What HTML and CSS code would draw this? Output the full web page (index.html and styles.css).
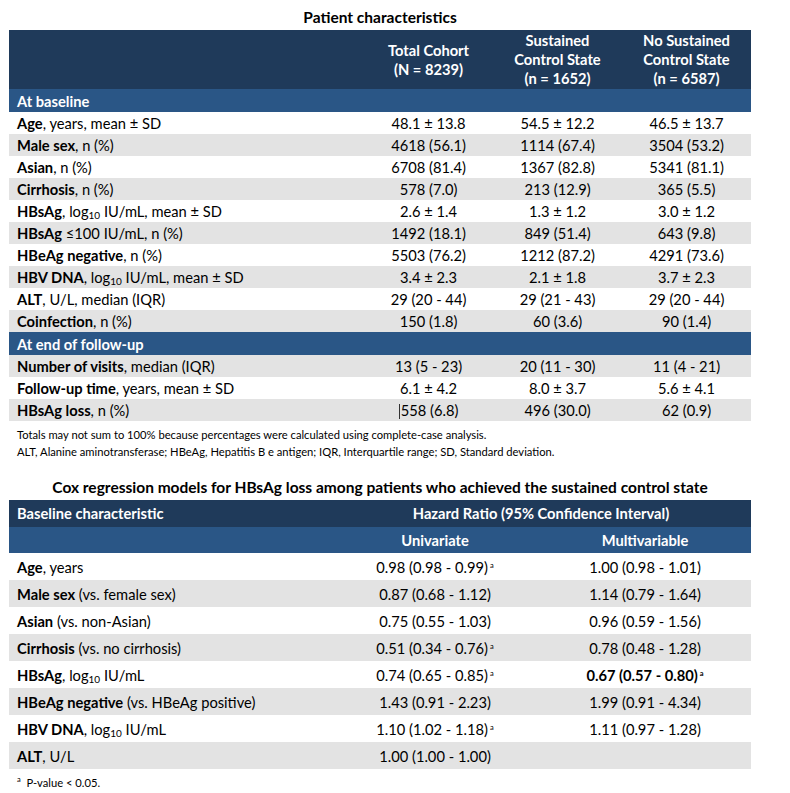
FILE: index.html
```html
<!DOCTYPE html>
<html lang="en">

<head>
    <meta charset="UTF-8">
    <meta name="viewport" content="width=device-width, initial-scale=1.0">
    <title>HBsAg loss - patient characteristics</title>
    <link rel="stylesheet" href="styles.css">
</head>

<body>
    <div class="page">
        <h2 class="table-title">Patient characteristics</h2>

        <table class="data-table characteristics">
            <colgroup>
                <col class="col-label">
                <col class="col-group">
                <col class="col-group">
                <col class="col-group">
            </colgroup>
            <thead>
                <tr class="head-main">
                    <th></th>
                    <th>Total Cohort<br>(N = 8239)</th>
                    <th>Sustained<br>Control State<br>(n = 1652)</th>
                    <th>No Sustained<br>Control State<br>(n = 6587)</th>
                </tr>
            </thead>
            <tbody>
                <tr class="section">
                    <td colspan="4">At baseline</td>
                </tr>
                <tr>
                    <td><b>Age</b>, years, mean ± SD</td>
                    <td>48.1 ± 13.8</td>
                    <td>54.5 ± 12.2</td>
                    <td>46.5 ± 13.7</td>
                </tr>
                <tr class="shade">
                    <td><b>Male sex</b>, n (%)</td>
                    <td>4618 (56.1)</td>
                    <td>1114 (67.4)</td>
                    <td>3504 (53.2)</td>
                </tr>
                <tr>
                    <td><b>Asian</b>, n (%)</td>
                    <td>6708 (81.4)</td>
                    <td>1367 (82.8)</td>
                    <td>5341 (81.1)</td>
                </tr>
                <tr class="shade">
                    <td><b>Cirrhosis</b>, n (%)</td>
                    <td>578 (7.0)</td>
                    <td>213 (12.9)</td>
                    <td>365 (5.5)</td>
                </tr>
                <tr>
                    <td><b>HBsAg</b>, log<sub>10</sub> IU/mL, mean ± SD</td>
                    <td>2.6 ± 1.4</td>
                    <td>1.3 ± 1.2</td>
                    <td>3.0 ± 1.2</td>
                </tr>
                <tr class="shade">
                    <td><b>HBsAg</b> ≤100 IU/mL, n (%)</td>
                    <td>1492 (18.1)</td>
                    <td>849 (51.4)</td>
                    <td>643 (9.8)</td>
                </tr>
                <tr>
                    <td><b>HBeAg negative</b>, n (%)</td>
                    <td>5503 (76.2)</td>
                    <td>1212 (87.2)</td>
                    <td>4291 (73.6)</td>
                </tr>
                <tr class="shade">
                    <td><b>HBV DNA</b>, log<sub>10</sub> IU/mL, mean ± SD</td>
                    <td>3.4 ± 2.3</td>
                    <td>2.1 ± 1.8</td>
                    <td>3.7 ± 2.3</td>
                </tr>
                <tr>
                    <td><b>ALT</b>, U/L, median (IQR)</td>
                    <td>29 (20 - 44)</td>
                    <td>29 (21 - 43)</td>
                    <td>29 (20 - 44)</td>
                </tr>
                <tr class="shade">
                    <td><b>Coinfection</b>, n (%)</td>
                    <td>150 (1.8)</td>
                    <td>60 (3.6)</td>
                    <td>90 (1.4)</td>
                </tr>
            </tbody>
            <tbody>
                <tr class="section">
                    <td colspan="4">At end of follow-up</td>
                </tr>
                <tr class="shade">
                    <td><b>Number of visits</b>, median (IQR)</td>
                    <td>13 (5 - 23)</td>
                    <td>20 (11 - 30)</td>
                    <td>11 (4 - 21)</td>
                </tr>
                <tr>
                    <td><b>Follow-up time</b>, years, mean ± SD</td>
                    <td>6.1 ± 4.2</td>
                    <td>8.0 ± 3.7</td>
                    <td>5.6 ± 4.1</td>
                </tr>
                <tr class="shade">
                    <td><b>HBsAg loss</b>, n (%)</td>
                    <td><span class="caret"></span>558 (6.8)</td>
                    <td>496 (30.0)</td>
                    <td>62 (0.9)</td>
                </tr>
            </tbody>
        </table>

        <div class="notes">
            <p>Totals may not sum to 100% because percentages were calculated using complete-case analysis.</p>
            <p>ALT, Alanine aminotransferase; HBeAg, Hepatitis B e antigen; IQR, Interquartile range; SD, Standard deviation.</p>
        </div>

        <h2 class="table-title second">Cox regression models for HBsAg loss among patients who achieved the sustained control state</h2>

        <table class="data-table regression">
            <colgroup>
                <col class="col-label2">
                <col class="col-uni">
                <col class="col-multi">
            </colgroup>
            <thead>
                <tr class="head-main">
                    <th class="left">Baseline characteristic</th>
                    <th colspan="2">Hazard Ratio (95% Confidence Interval)</th>
                </tr>
                <tr class="head-sub">
                    <th></th>
                    <th>Univariate</th>
                    <th>Multivariable</th>
                </tr>
            </thead>
            <tbody>
                <tr>
                    <td><b>Age</b>, years</td>
                    <td>0.98 (0.98 - 0.99)<sup>a</sup></td>
                    <td>1.00 (0.98 - 1.01)</td>
                </tr>
                <tr>
                    <td><b>Male sex</b> (vs. female sex)</td>
                    <td>0.87 (0.68 - 1.12)</td>
                    <td>1.14 (0.79 - 1.64)</td>
                </tr>
                <tr>
                    <td><b>Asian</b> (vs. non-Asian)</td>
                    <td>0.75 (0.55 - 1.03)</td>
                    <td>0.96 (0.59 - 1.56)</td>
                </tr>
                <tr>
                    <td><b>Cirrhosis</b> (vs. no cirrhosis)</td>
                    <td>0.51 (0.34 - 0.76)<sup>a</sup></td>
                    <td>0.78 (0.48 - 1.28)</td>
                </tr>
                <tr>
                    <td><b>HBsAg</b>, log<sub>10</sub> IU/mL</td>
                    <td>0.74 (0.65 - 0.85)<sup>a</sup></td>
                    <td><b>0.67 (0.57 - 0.80)<sup>a</sup></b></td>
                </tr>
                <tr>
                    <td><b>HBeAg negative</b> (vs. HBeAg positive)</td>
                    <td>1.43 (0.91 - 2.23)</td>
                    <td>1.99 (0.91 - 4.34)</td>
                </tr>
                <tr>
                    <td><b>HBV DNA</b>, log<sub>10</sub> IU/mL</td>
                    <td>1.10 (1.02 - 1.18)<sup>a</sup></td>
                    <td>1.11 (0.97 - 1.28)</td>
                </tr>
                <tr>
                    <td><b>ALT</b>, U/L</td>
                    <td>1.00 (1.00 - 1.00)</td>
                    <td></td>
                </tr>
            </tbody>
        </table>

        <div class="notes">
            <p><sup>a</sup>&nbsp; P-value &lt; 0.05.</p>
        </div>
    </div>
</body>

</html>
```

FILE: styles.css
```css
body {
    margin: 0;
    background-color: white;
    font-family: Lato, "Open Sans", sans-serif;
    color: #000;
}

.page {
    width: 742px;
    padding-left: 9px;
}

.table-title {
    margin: 7px 0 3px;
    font-size: 15.5px;
    line-height: 20px;
    font-weight: bold;
    text-align: center;
}

.table-title.second {
    margin-top: 17px;
}

.data-table {
    width: 742px;
    border-collapse: collapse;
    table-layout: fixed;
    font-size: 14.7px;
}

.col-label {
    width: 355px;
}

.col-group {
    width: 129px;
}

.col-label2 {
    width: 322px;
}

.col-uni {
    width: 208px;
}

.col-multi {
    width: 212px;
}

.data-table th,
.data-table td {
    padding: 0 8px;
    text-align: center;
    white-space: nowrap;
}

.data-table td:first-child {
    text-align: left;
}

.data-table th.left {
    text-align: left;
}

.head-main {
    background-color: #1f3a5a;
    color: white;
}

.head-main th {
    font-weight: bold;
    line-height: 19px;
}

.characteristics .head-main {
    height: 59px;
}

.regression .head-main {
    height: 27px;
}

.head-sub {
    background-color: #2a5686;
    color: white;
    height: 26px;
}

.section {
    background-color: #2a5686;
    color: white;
    font-weight: bold;
    height: 23px;
}

.characteristics tbody tr {
    height: 22px;
}

.characteristics tbody tr.section {
    height: 23px;
}

.characteristics tr.shade {
    background-color: #e3e3e3;
}

.regression tbody tr {
    height: 27px;
}

.regression tbody tr:nth-child(even) {
    background-color: #e3e3e3;
}

.data-table td {
    line-height: 18px;
}

sub {
    font-size: 10px;
    line-height: 0;
    vertical-align: -2px;
}

sup {
    font-size: 7.5px;
    line-height: 0;
    vertical-align: 5px;
    margin-left: 2px;
}

.caret {
    display: inline-block;
    width: 1px;
    height: 15px;
    margin-right: 1px;
    vertical-align: -3px;
    background-color: #333;
}

.notes {
    margin-top: 5px;
    font-size: 11.2px;
}

.notes p {
    margin: 0;
    padding-left: 8px;
    line-height: 17px;
}

.notes sup {
    margin-left: 0;
}
```
